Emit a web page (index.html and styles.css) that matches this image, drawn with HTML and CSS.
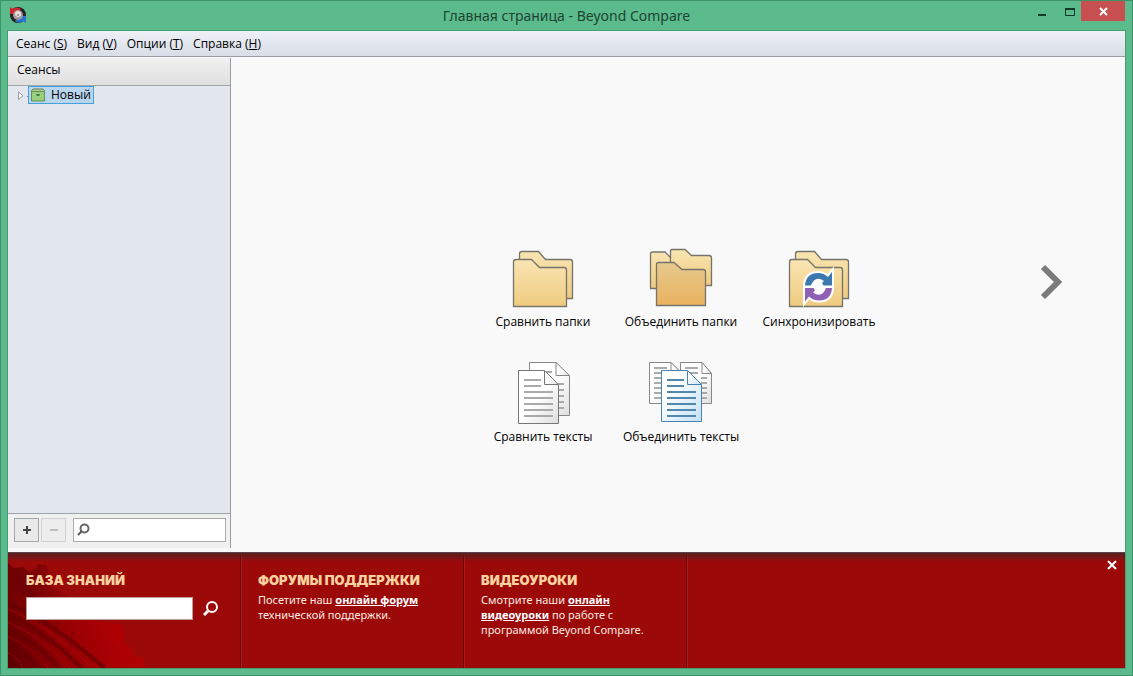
FILE: index.html
```html
<!DOCTYPE html>
<html lang="ru">
<head>
	<meta charset="UTF-8">
	<title>Главная страница - Beyond Compare</title>
	<link rel="stylesheet" href="styles.css">
</head>
<body>
	<div class="window">
		<header class="titlebar">
			<svg class="logo" width="18" height="18" viewBox="0 0 18 18">
				<circle cx="9" cy="9" r="8" fill="#252326"/>
				<path d="M1 8 1 1l3 2Q8 0 12 3L9 6 5 8z" fill="#d9232b"/>
				<path d="M17 10v7l-3-2q-4 3-8 0l4-3 4-2z" fill="#2873d0"/>
				<circle cx="9" cy="9" r="5" fill="#a39b99"/>
				<circle cx="9" cy="8" r="3" fill="#e6dfdc"/>
				<circle cx="9" cy="9" r="1" fill="#8b7f7c"/>
			</svg>
			<h1>Главная страница - Beyond Compare</h1>
			<div class="controls">
				<button type="button" aria-label="Свернуть">
					<svg width="28" height="21" viewBox="0 0 28 21"><path d="M11 14h8" stroke="#14382a" stroke-width="2"/></svg>
				</button>
				<button type="button" aria-label="Развернуть">
					<svg width="26" height="21" viewBox="0 0 26 21"><path d="M10.500 7v7.500h9V7" fill="none" stroke="#14382a"/><path d="M10 8h10" stroke="#14382a" stroke-width="2"/></svg>
				</button>
				<button type="button" class="close" aria-label="Закрыть">
					<svg width="44" height="20" viewBox="0 0 44 20"><path d="M19 7l7 7M26 7l-7 7" stroke="#fff" stroke-width="2"/></svg>
				</button>
			</div>
		</header>

		<div class="client">
			<nav class="menu">
				<button type="button">Сеанс (<u>S</u>)</button>
				<button type="button">Вид (<u>V</u>)</button>
				<button type="button">Опции (<u>T</u>)</button>
				<button type="button">Справка (<u>H</u>)</button>
			</nav>

			<div class="content">
				<aside class="sidebar">
					<h2>Сеансы</h2>
					<div class="tree">
						<div class="node">
							<svg width="12" height="12" viewBox="0 0 12 12"><path d="M2.500 3v7.500l4.500-3.750z" fill="#fff" stroke="#999"/><path d="M11 7.500h1" stroke="#888"/></svg>
							<button type="button">
								<svg width="14" height="14" viewBox="0 0 14 14">
									<path d="M.5 4V2.500L2 1h10l1.500 1.500V4z" fill="#a9cd92" stroke="#66805f"/>
									<path d="M.5 3.500h13v9.500H.5z" fill="#99d080" stroke="#668f58"/>
									<path d="M5 6h4L8 8H6z" fill="#497a3b"/>
								</svg>
								Новый
							</button>
						</div>
					</div>
					<div class="tools">
						<button type="button" aria-label="Добавить">
							<svg width="10" height="10" viewBox="0 0 10 10"><path d="M1 5h8M5 1v8" stroke="#444" stroke-width="2"/></svg>
						</button>
						<button type="button" aria-label="Удалить" disabled>
							<svg width="10" height="10" viewBox="0 0 10 10"><path d="M1 5h8" stroke="#bbb" stroke-width="2"/></svg>
						</button>
						<label class="filter">
							<svg width="14" height="14" viewBox="0 0 14 14"><circle cx="7.500" cy="5.500" r="4" fill="none" stroke="#666" stroke-width="2"/><path d="M4.500 8.500L1 12" stroke="#555" stroke-width="2"/></svg>
							<input type="text" aria-label="Поиск сеанса">
						</label>
					</div>
				</aside>

				<main class="home">
					<div class="actions">
						<button type="button">
							<svg width="64" height="64" viewBox="0 0 64 64">
								<defs>
									<linearGradient id="sand" x2="0" y2="1"><stop offset="0" stop-color="#f9e5b3"/><stop offset="1" stop-color="#efcb80"/></linearGradient>
									<linearGradient id="amber" x2="0" y2="1"><stop offset="0" stop-color="#e6c98d"/><stop offset="1" stop-color="#e9b25f"/></linearGradient>
									<linearGradient id="paper" x2="1" y2="1"><stop offset=".5" stop-color="#fff"/><stop offset="1" stop-color="#dedede"/></linearGradient>
									<linearGradient id="bluepaper" x2="1" y2="1"><stop offset=".3" stop-color="#fff"/><stop offset="1" stop-color="#c3e0f5"/></linearGradient>
									<g id="pair" fill="url(#sand)" stroke="#76736b" stroke-width="1.300">
										<path d="M8.500 52.500V8q0-2.500 2.500-2.500h16.500l7 8H59q2.500 0 2.500 2.500v36.500z"/>
										<path d="M2.500 60.500V16q0-2.500 2.500-2.500h15.500l8 8H53q2.500 0 2.500 2.500v36.500z"/>
									</g>
								</defs>
								<use href="#pair"/>
							</svg>
							Сравнить папки
						</button>
						<button type="button">
							<svg width="64" height="64" viewBox="0 0 64 64">
								<g stroke="#76736b" stroke-width="1.300">
									<path d="M1.500 42.500V8q0-2 2-2H16l7 7h10v29.500z" fill="url(#sand)"/>
									<path d="M21.500 39.500v-34q0-2 2-2H36l6.500 6H60q2.500 0 2.500 2.500v27.500z" fill="url(#sand)"/>
									<path d="M7.500 59.500V18.500q0-2 2-2H25l8 7h21q2.500 0 2.500 2.500v33.500z" fill="url(#amber)"/>
								</g>
							</svg>
							Объединить папки
						</button>
						<button type="button">
							<svg width="64" height="64" viewBox="0 0 64 64">
								<defs>
									<path id="over" d="M18 39.500Q19 27 31 27q6 0 10 4l4-5v13.500H32.500l4.500-4.500q-9-6-13 4.500z"/>
									<path id="under" d="M45 42Q44 54.500 32 54.500q-6 0-10-4l-4 5V42h12.500L26 46.500q9 6 13-4.500z"/>
								</defs>
								<use href="#pair"/>
								<g fill="#fff" stroke="#fff" stroke-width="4">
									<circle cx="31.500" cy="40.750" r="7"/>
									<use href="#over"/>
									<use href="#under"/>
								</g>
								<use href="#over" fill="#3a78ae"/>
								<use href="#under" fill="#8e61b5"/>
								<circle cx="31.500" cy="40.750" r="5" fill="#fff"/>
							</svg>
							Синхронизировать
						</button>
						<button type="button">
							<svg width="64" height="64" viewBox="0 0 64 64">
								<g fill="url(#paper)" stroke="#888">
									<path d="M18.500 1.500H45l13.500 13v40h-40z"/>
									<path d="M45 1.500v13h13.500z"/>
								</g>
								<path d="M32 11h9M47 23h6M47 29h6M47 35h6M47 41h6M47 47h6" stroke="#aaa" stroke-width="2"/>
								<g fill="url(#paper)" stroke="#777">
									<path d="M7.500 9.500h26l14 14v39h-40z"/>
									<path d="M33.500 9.500v14h14z"/>
								</g>
								<path d="M13 19h17M13 25h17M13 31h29M13 37h29M13 43h29M13 49h29M13 55h29" stroke="#aaa" stroke-width="2"/>
							</svg>
							Сравнить тексты
						</button>
						<button type="button">
							<svg width="64" height="64" viewBox="0 0 64 64">
								<g fill="url(#paper)" stroke="#888">
									<path d="M.5 1.500H22l10 10v31H.5z"/>
									<path d="M22 1.500v10h10z"/>
									<path d="M31.500 1.500H53l9.500 11v30h-31z"/>
									<path d="M53 1.500v11h9.500z"/>
								</g>
								<path d="M5 7h13M5 12h13M5 17h8M5 22h8M5 27h8M5 32h8M5 37h8M36 7h13M38 12h11M52 17h6M52 22h6M52 27h6M52 32h6M52 37h6" stroke="#aaa" stroke-width="2"/>
								<g fill="url(#bluepaper)" stroke="#4682b4">
									<path d="M12.500 9.500H38l14.500 14v37h-40z"/>
									<path d="M38.500 9.500v14h14z"/>
								</g>
								<path d="M18 19h17M18 25h17M18 31h29M18 37h29M18 43h29M18 49h29M18 55h29" stroke="#5188b0" stroke-width="2"/>
							</svg>
							Объединить тексты
						</button>
					</div>
					<button type="button" class="next" aria-label="Далее">
						<svg width="24" height="36" viewBox="0 0 24 36"><path d="M4 3l15 15L4 33" fill="none" stroke="#7b7b7b" stroke-width="6"/></svg>
					</button>
				</main>
			</div>

			<footer class="banner">
				<svg class="gears" width="145" height="115" viewBox="0 0 145 115">
					<defs>
						<linearGradient id="glow" gradientUnits="userSpaceOnUse" x1="0" y1="100" x2="100" y2="65"><stop offset="0" stop-color="#5c0002"/><stop offset=".45" stop-color="#8f0003"/><stop offset="1" stop-color="#ad0104"/></linearGradient>
						<linearGradient id="shade" gradientUnits="userSpaceOnUse" x1="0" y1="40" x2="60" y2="30"><stop offset="0" stop-color="#640002"/><stop offset="1" stop-color="#980607"/></linearGradient>
					</defs>
					<path d="M0 10l6 5 9-1 7 5 6-4 2-4 9 1 2 8-3 8 8 8 12 5 8 12 16 8 16 3-3 12H0z" fill="url(#shade)"/>
					<path d="M0 34l14 5 12 8 18 5 16 10 14 7 10-2 12 2 17 2 4 8-1 10 7 6 4 9 9 1v6l4 4H0z" fill="url(#glow)"/>
					<g fill="none" stroke="#650003" stroke-width="4" opacity=".7">
						<path d="M0 50q37 14 97 65M0 62q35 15 74 53M0 75q30 15 51 40M0 90q18 9 30 25"/>
					</g>
					<g fill="none" stroke="#750003" stroke-width="2" opacity=".7">
						<path d="M20 47l-7 21M34 58l-6 21M50 68l-5 20M65 79l-3 18M19 65l-8 19M36 79l-9 16"/>
					</g>
					<g fill="none" stroke="#b90407" opacity=".7">
						<path d="M0 56q37 14 85 59M0 69q33 15 62 46M0 83q25 13 40 32M0 100q10 4 15 15"/>
					</g>
					<path d="M0 11l9 7 6 12 9 7 4 9-14-4L0 39z" fill="#700003"/>
				</svg>
				<section class="kb">
					<h3><label for="kb">БАЗА ЗНАНИЙ</label></h3>
					<div class="kbsearch">
						<input type="text" id="kb">
						<button type="button" aria-label="Найти">
							<svg width="16" height="16" viewBox="0 0 16 16"><circle cx="9" cy="6" r="5" fill="none" stroke="#fff" stroke-width="2"/><path d="M5 10l-4 4" stroke="#fff" stroke-width="3"/></svg>
						</button>
					</div>
				</section>
				<section>
					<h3>ФОРУМЫ ПОДДЕРЖКИ</h3>
					<p>Посетите наш <a href="#">онлайн форум</a> технической поддержки.</p>
				</section>
				<section>
					<h3>ВИДЕОУРОКИ</h3>
					<p>Смотрите наши <a href="#">онлайн видеоуроки</a> по работе с программой Beyond Compare.</p>
				</section>
				<button type="button" class="hide" aria-label="Скрыть">
					<svg width="10" height="10" viewBox="0 0 10 10"><path d="M1 1l8 8M9 1L1 9" stroke="#fff" stroke-width="2"/></svg>
				</button>
			</footer>
		</div>
	</div>
</body>
</html>
```
FILE: styles.css
```css
* {
	box-sizing: border-box;
}
body {
	margin: 0;
	font: 12px/18px "Open Sans", "Noto Sans", sans-serif;
	color: #000;
}
h1, h2, h3, p {
	margin: 0;
	font-weight: normal;
}
button {
	padding: 0;
	border: 0;
	background: none;
	font: inherit;
	color: inherit;
}
svg {
	display: block;
	flex: none;
}
.window {
	display: flex;
	flex-direction: column;
	min-height: 100vh;
	padding: 0 7px 7px;
	border: 1px solid #3b9468;
	background: #5cbb8c;
}

/* title bar */
.titlebar {
	display: grid;
	grid-template-columns: 1fr auto 1fr;
	height: 30px;
}
.logo {
	margin: 5px 0 0 1px;
}
.titlebar h1 {
	font: 14px/29px "Noto Sans", sans-serif;
	color: #1b4532;
}
.controls {
	display: flex;
	justify-content: flex-end;
	align-items: flex-start;
}
.controls .close {
	background: #c84f50;
}

/* menu */
.client {
	display: flex;
	flex: 1;
	flex-direction: column;
	background: #f9f9f9;
	outline: 1px solid #459d70;
}
.menu {
	display: flex;
	gap: 10px;
	height: 26px;
	padding: 0 8px;
	border-bottom: 1px solid #9c9ca2;
	background: linear-gradient(#eef1f6, #d9dde7);
}

/* sessions */
.content {
	display: flex;
	flex: 1;
}
.sidebar {
	display: flex;
	flex-direction: column;
	width: 223px;
	margin: 1px 0 4px;
	border-right: 1px solid #9a9ca3;
	background: #f0f0f0;
}
.sidebar h2 {
	height: 28px;
	padding: 0 9px;
	border-bottom: 1px solid #a3a5a9;
	background: linear-gradient(#f1f1f1, #dfdfdf);
	font-size: 12px;
	line-height: 24px;
}
.tree {
	flex: 1;
	padding-left: 8px;
	background: #e2e6ee;
}
.node {
	display: flex;
	align-items: center;
}
.node button {
	display: flex;
	align-items: center;
	gap: 6px;
	height: 18px;
	padding: 0 2px;
	border: 1px solid #45a1dc;
	background: #b9d6ee;
	line-height: 16px;
}
.tools {
	display: flex;
	gap: 2px;
	height: 35px;
	padding: 4px;
	padding-left: 6px;
	border-top: 1px solid #a0a2a7;
}
.tools button {
	display: flex;
	align-items: center;
	justify-content: center;
	width: 25px;
	height: 24px;
	border: 1px solid #a4a7ab;
	background: #e9e9e9;
}
.tools button:disabled {
	border-color: #d0d0d0;
	background: #ededed;
}
.filter {
	display: flex;
	flex: 1;
	align-items: center;
	height: 24px;
	margin-left: 5px;
	padding: 0 3px;
	border: 1px solid #a9abaf;
	background: #fff;
}
.filter input {
	flex: 1;
	width: 0;
	border: 0;
	background: none;
	outline: 0;
}

/* start actions */
.home {
	display: flex;
	flex: 1;
	align-items: flex-start;
	justify-content: center;
	position: relative;
	padding: 189px 0 60px 6px;
}
.actions {
	display: grid;
	grid-template-columns: repeat(3, 138px);
	row-gap: 30px;
}
.actions button {
	display: flex;
	flex-direction: column;
	align-items: center;
	gap: 3px;
	white-space: nowrap;
}
.next {
	position: absolute;
	top: 207px;
	right: 62px;
}

/* bottom banner */
.banner {
	display: flex;
	position: relative;
	height: 116px;
	border-top: 1px solid #55454a;
	background: #9c0909;
}
.banner::before {
	content: "";
	position: absolute;
	z-index: 1;
	top: 0;
	left: 0;
	right: 0;
	height: 9px;
	background: linear-gradient(#5a1f22, rgba(156, 9, 9, 0));
}
.gears {
	position: absolute;
	left: 0;
	bottom: 0;
}
.banner section {
	position: relative;
	width: 223px;
	padding: 18px 16px 0 17px;
	border-right: 1px solid #6c0405;
	box-shadow: 1px 0 #b01a1a;
	font: 11px/15px "Noto Sans", sans-serif;
	color: #fbe9e0;
}
.banner .kb {
	width: 233px;
	padding-left: 18px;
}
.banner h3 {
	margin-bottom: 2px;
	font: 900 13px/19px Inter, "Liberation Sans", sans-serif;
	color: #fad2a0;
	white-space: nowrap;
}
.banner a {
	font-weight: bold;
	color: #fff;
}
.kbsearch {
	display: flex;
	align-items: center;
	gap: 10px;
	padding-top: 5px;
}
.kbsearch input {
	width: 167px;
	height: 23px;
	border: 1px solid #c09c9c;
	background: #fff;
}
.hide {
	position: absolute;
	top: 7px;
	right: 8px;
}
```
